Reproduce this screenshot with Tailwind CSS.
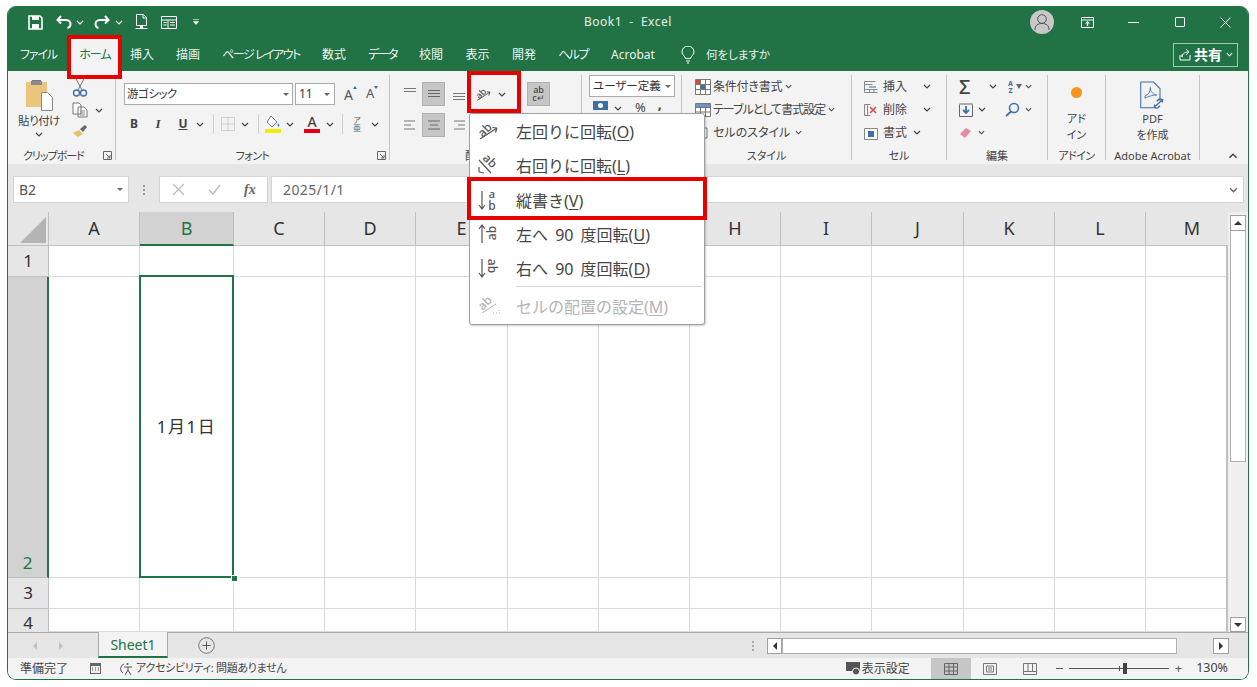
<!DOCTYPE html>
<html lang="ja">
<head>
<meta charset="UTF-8">
<title>Book1 - Excel</title>
<script src="https://cdn.jsdelivr.net/npm/@tailwindcss/browser@4"></script>
</head>
<body class="bg-white font-['Noto_Sans','Noto_Sans_CJK_JP',sans-serif] [font-feature-settings:'palt'] text-[#444]">
<svg class="hidden">
  <symbol id="chev" viewBox="0 0 8 5"><path d="M1 1l3 3 3-3" fill="none" stroke="currentColor" stroke-width="1.2"/></symbol>
  <symbol id="launch" viewBox="0 0 9 9"><path d="M.5 8.5v-8h8v8z M3 3l4 4M7 4v3H4" fill="none" stroke="#666" stroke-width="1"/></symbol>
  <symbol id="al-top" viewBox="0 0 14 16"><path d="M1 2.500h12M1 5.500h12" stroke="#777" stroke-width="1"/></symbol>
  <symbol id="al-mid" viewBox="0 0 14 16"><path d="M1 4.500h12M1 7.500h12M1 10.500h12" stroke="#666" stroke-width="1"/></symbol>
  <symbol id="al-bot" viewBox="0 0 14 16"><path d="M1 7.500h12M1 10.500h12M1 13.500h12" stroke="#777" stroke-width="1"/></symbol>
  <symbol id="lines-c" viewBox="0 0 14 10"><path d="M1 1h12M3 5h8M1 9h12" stroke="#666" stroke-width="1"/></symbol>
  <symbol id="lines-l" viewBox="0 0 14 10"><path d="M1 1h11M1 5h7M1 9h11" stroke="#777" stroke-width="1"/></symbol>
  <symbol id="lines-r" viewBox="0 0 14 10"><path d="M2 1h11M6 5h7M2 9h11" stroke="#777" stroke-width="1"/></symbol>
</svg>
<div class="relative w-[1257px] h-[687px] overflow-hidden pl-[7px] pt-[6px]">
  <div class="w-[1242px] h-[674px] flex flex-col rounded-[9px] overflow-hidden border-x border-b border-[#217346] bg-[#f3f3f3]">

    <!-- title bar -->
    <div class="h-[32px] shrink-0 bg-[#217346] flex items-center text-white pl-[20px] pr-[17px]">
      <svg class="w-[15px] h-[15px]" viewBox="0 0 15 15"><path d="M1 1h11l2 2v11H1z" fill="none" stroke="#fff" stroke-width="1.6"/><path d="M4 1h7v4H4zM4 9h7v5H4z" fill="#fff"/></svg>
      <svg class="ml-[13px] w-[16px] h-[14px]" viewBox="0 0 16 14"><path d="M5 1L1.500 5 5 8.500M2 5h8c3 0 4.500 2 4.500 4s-1 3.500-3 4" fill="none" stroke="#fff" stroke-width="2"/></svg>
      <svg class="ml-[4px] w-[8px] h-[5px]"><use href="#chev"/></svg>
      <svg class="ml-[10px] w-[16px] h-[14px]" viewBox="0 0 16 14"><path d="M11 1l3.500 4L11 8.500M14 5H6C3 5 1.500 7 1.500 9s1 3.500 3 4" fill="none" stroke="#fff" stroke-width="2"/></svg>
      <svg class="ml-[5px] w-[8px] h-[5px]"><use href="#chev"/></svg>
      <svg class="ml-[12px] w-[13px] h-[16px]" viewBox="0 0 13 16"><path d="M1.500.5h7l3 3v8h-10zM8 .5v3.500h3.500M.5 14.500h12" fill="none" stroke="#fff"/><path d="M5 12h3v2H5z" fill="#fff"/></svg>
      <svg class="ml-[13px] w-[16px] h-[13px]" viewBox="0 0 16 13"><path d="M.5.500h15v12H.5zM1 4h14M7 4v9M9 6.500h5M9 9h5M2.500 6.500h3M2.500 9h3" fill="none" stroke="#fff"/></svg>
      <svg class="ml-[16px] w-[6px] h-[6px]" viewBox="0 0 6 6"><path d="M0 .5h6M.5 2.500h5L3 5.500z" fill="#fff" stroke="#fff" stroke-width=".6"/></svg>
      <span class="ml-[385px] text-[12px] tracking-[.5px] text-white/90 whitespace-pre">Book1  -  Excel</span>
      <div class="ml-auto flex items-center">
        <div class="w-[24px] h-[24px] rounded-full bg-[#c8c8c8] flex items-center justify-center">
          <svg class="w-[16px] h-[18px]" viewBox="0 0 16 18"><circle cx="8" cy="6" r="4.300" fill="none" stroke="#555"/><path d="M1 17c0-5 3-6.500 7-6.500s7 1.500 7 6.500" fill="none" stroke="#555"/></svg>
        </div>
        <svg class="ml-[27px] w-[13px] h-[11px]" viewBox="0 0 13 11"><path d="M.5.500h12v10H.5zM1 3h11" fill="none" stroke="#fff"/><path d="M6.500 4l2.500 2.500H7.200V9H5.800V6.500H4z" fill="#fff"/></svg>
        <span class="ml-[34px] w-[11px] h-px bg-white"></span>
        <span class="ml-[36px] w-[10px] h-[10px] rounded-[1px] border border-white"></span>
        <svg class="ml-[35px] w-[11px] h-[11px]" viewBox="0 0 11 11"><path d="M.5.500l10 10M10.500.5l-10 10" stroke="#fff"/></svg>
      </div>
    </div>

    <!-- tabs -->
    <div class="h-[33px] shrink-0 bg-[#217346] flex items-center text-[12px] text-white/95">
      <span class="ml-[12px] w-[35px] text-center whitespace-nowrap tracking-[-1.200px]">ファイル</span>
      <span class="ml-[15px] w-[50px] h-full bg-[#f3f3f3] text-[#217346] flex items-center justify-center tracking-[-1px]">ホーム</span>
      <div class="ml-[10px] flex gap-[22px] [&>span]:text-center [&>span]:whitespace-nowrap">
        <span class="w-[24px]">挿入</span>
        <span class="w-[24px]">描画</span>
        <span class="w-[78px] tracking-[-1.500px]">ページ レイアウト</span>
        <span class="w-[24px]">数式</span>
        <span class="w-[29px] tracking-[-1.500px]">データ</span>
        <span class="w-[24px]">校閲</span>
        <span class="w-[25px]">表示</span>
        <span class="w-[24px]">開発</span>
        <span class="w-[30px] tracking-[-1.500px]">ヘルプ</span>
        <span class="w-[46px]">Acrobat</span>
      </div>
      <svg class="ml-[25px] w-[14px] h-[18px]" viewBox="0 0 14 18"><path d="M4.500 12.500C4 10 1 9 1 6a6 6 0 0112 0c0 3-3 4-3.500 6.500zM5 15h4M6 17h2" fill="none" stroke="#fff"/></svg>
      <span class="ml-[11px] text-[11.500px] text-white/90">何をしますか</span>
      <div class="ml-auto mr-[10px] w-[65px] h-[24px] border border-[#a5c9b5] flex items-center pl-[5px] gap-[2px]">
        <svg class="w-[13px] h-[13px]" viewBox="0 0 13 13"><path d="M1 7v5h10V7M3 6.500V9M3 9c0-3 3-5 6-5M7 1l3 3-3 3" fill="none" stroke="#fff"/></svg>
        <span class="font-bold text-[14px] text-white">共有</span>
        <svg class="ml-[2px] w-[7px] h-[5px]"><use href="#chev"/></svg>
      </div>
    </div>

    <!-- ribbon -->
    <div class="h-[93px] shrink-0 bg-[#f3f3f3] flex text-[12px] text-[#444] [&>section]:relative [&>section]:h-[85px] [&>section]:mt-[4px] [&>section]:border-r [&>section]:border-[#c6c6c6]">

      <!-- clipboard -->
      <section class="w-[108px]">
        <div class="h-[71px] flex">
          <div class="ml-[8px] w-[46px] flex flex-col items-center">
            <svg class="mt-[4px] w-[29px] h-[32px]" viewBox="0 0 29 32"><path d="M1 3h21v25H1z" fill="#ebc57e"/><path d="M7 3h9V1h-9z" fill="#777"/><path d="M6 2h11v4H6z" fill="#8a8a8a"/><path d="M16.500 13.500h6l5 5v13h-11z" fill="#fff" stroke="#888"/></svg>
            <span class="mt-[2px] text-[11.500px] leading-[16px] whitespace-nowrap tracking-[-.5px]">貼り付け</span>
            <svg class="mt-[3px] w-[8px] h-[5px]"><use href="#chev"/></svg>
          </div>
          <div class="ml-[10px] pt-[3px] flex flex-col">
            <svg class="w-[16px] h-[20px]" viewBox="0 0 16 20"><path d="M4 1l6 11M12 1L6 12" stroke="#777" fill="none"/><circle cx="4.500" cy="15" r="3" fill="none" stroke="#3f6fa8" stroke-width="1.400"/><circle cx="11.500" cy="15" r="3" fill="none" stroke="#3f6fa8" stroke-width="1.400"/></svg>
            <div class="mt-[4px] flex items-center">
              <svg class="w-[16px] h-[16px]" viewBox="0 0 16 16"><path d="M1 1h6l2 2v9H1zM6 5h6l3 3v7H6z" fill="#fff" stroke="#777"/><path d="M8 9h5M8 11h5M8 13h5" stroke="#888"/></svg>
              <svg class="ml-[7px] w-[8px] h-[5px]"><use href="#chev"/></svg>
            </div>
            <svg class="mt-[6px] w-[16px] h-[14px]" viewBox="0 0 16 14"><path d="M1 9l6-3 4 4-5 3z" fill="#e7c168"/><path d="M8 5l5-4 2 2-4 5z" fill="#666"/></svg>
          </div>
        </div>
        <div class="h-[17px] pl-[15px] text-[11px] leading-[20px] whitespace-nowrap tracking-[-1px]">クリップボード</div>
        <svg class="absolute right-[3px] top-[76px] w-[9px] h-[9px]"><use href="#launch"/></svg>
      </section>

      <!-- font -->
      <section class="w-[274px]">
        <div class="h-[71px] pl-[8px] pt-[8px]">
          <div class="flex items-center h-[22px]">
            <div class="w-[169px] h-[22px] bg-white border border-[#ababab] flex items-center pl-[2px] text-[11.500px] text-[#333] tracking-[-.5px]">游ゴシック<span class="ml-auto mr-[3px] w-0 h-0 border-x-[3px] border-t-[3px] border-x-transparent border-t-[#666]"></span></div>
            <div class="ml-[2px] w-[40px] h-[22px] bg-white border border-[#ababab] flex items-center pl-[3px] text-[12px] text-[#333]">11<span class="ml-auto mr-[4px] w-0 h-0 border-x-[3px] border-t-[3px] border-x-transparent border-t-[#666]"></span></div>
            <span class="ml-[9px] text-[14px] text-[#555] relative">A<span class="absolute -right-[4px] top-[2px] w-0 h-0 border-x-[2px] border-b-[3px] border-x-transparent border-b-[#3f6fa8]"></span></span>
            <span class="ml-[13px] text-[13px] text-[#555] relative">A<span class="absolute -right-[4px] top-[2px] w-0 h-0 border-x-[2px] border-t-[3px] border-x-transparent border-t-[#3f6fa8]"></span></span>
          </div>
          <div class="mt-[8px] flex items-center h-[22px] text-[#444]">
            <span class="w-[20px] text-center font-bold text-[12px]">B</span>
            <span class="ml-[4px] w-[20px] text-center italic font-bold text-[13px] font-['Liberation_Serif',serif]">I</span>
            <span class="ml-[6px] w-[18px] text-center font-bold text-[12px] underline">U</span>
            <svg class="ml-[4px] w-[8px] h-[5px]"><use href="#chev"/></svg>
            <span class="ml-[9px] w-px h-[20px] bg-[#d0d0d0]"></span>
            <svg class="ml-[7px] w-[14px] h-[14px]" viewBox="0 0 14 14"><path d="M.5.500h13v13H.5zM7 .5v13M.5 7h13" fill="none" stroke="#aaa" stroke-dasharray="1 1"/></svg>
            <svg class="ml-[6px] w-[8px] h-[5px]"><use href="#chev"/></svg>
            <span class="ml-[9px] w-px h-[20px] bg-[#d0d0d0]"></span>
            <svg class="ml-[6px] w-[16px] h-[18px]" viewBox="0 0 16 18"><path d="M6 1l6 6-5 5-5-5z" fill="#fff" stroke="#777"/><path d="M13 8c1 1.500 2 2 1 3.500-1 .5-2-.5-1-3.500z" fill="#3f7fc0"/><path d="M0 14h16v4H0z" fill="#f5ec00"/></svg>
            <svg class="ml-[5px] w-[8px] h-[5px]"><use href="#chev"/></svg>
            <div class="ml-[10px] w-[16px] flex flex-col items-center leading-[13px]"><span class="text-[14px] text-[#444] font-medium">A</span><span class="mt-[1px] w-[16px] h-[4px] bg-[#e60012]"></span></div>
            <svg class="ml-[6px] w-[8px] h-[5px]"><use href="#chev"/></svg>
            <span class="ml-[8px] w-px h-[20px] bg-[#d0d0d0]"></span>
            <span class="ml-[8px] w-[12px] text-center text-[8px] leading-[8px] text-[#666]">ア<br>亜</span>
            <svg class="ml-[8px] w-[8px] h-[5px]"><use href="#chev"/></svg>
          </div>
        </div>
        <div class="h-[17px] text-center text-[11px] leading-[20px] tracking-[-.6px]">フォント</div>
        <svg class="absolute right-[3px] top-[76px] w-[9px] h-[9px]"><use href="#launch"/></svg>
      </section>

      <!-- alignment -->
      <section class="w-[192px]">
        <div class="h-[71px] pl-[13px] pt-[7px]">
          <div class="flex items-center h-[24px]">
            <svg class="w-[14px] h-[16px]"><use href="#al-top"/></svg>
            <span class="ml-[5px] w-[23px] h-[24px] bg-[#c6c6c6] border border-[#b0b0b0] flex items-center justify-center"><svg class="w-[14px] h-[16px]"><use href="#al-mid"/></svg></span>
            <svg class="ml-[7px] w-[14px] h-[16px]"><use href="#al-bot"/></svg>
            <svg class="ml-[9px] w-[18px] h-[16px]" viewBox="0 0 24 21"><text x="8" y="14" text-anchor="middle" font-size="12" font-weight="500" fill="#555" transform="rotate(-45 8 10)">ab</text><path d="M3 19L20 8M20 8l-4.500-.5M20 8l-1.500 4.500" stroke="#555" stroke-width="1.300" fill="none"/></svg>
            <svg class="ml-[5px] w-[8px] h-[5px]"><use href="#chev"/></svg>
            <span class="ml-[21px] w-[23px] h-[24px] bg-[#c6c6c6] border border-[#b0b0b0] flex flex-col items-center justify-center text-[9px] leading-[8px] text-[#444] font-medium"><span>ab</span><span>c↵</span></span>
          </div>
          <div class="mt-[7px] flex items-center h-[24px]">
            <svg class="w-[14px] h-[10px]"><use href="#lines-l"/></svg>
            <span class="ml-[5px] w-[23px] h-[24px] bg-[#c6c6c6] border border-[#b0b0b0] flex items-center justify-center"><svg class="w-[14px] h-[10px]"><use href="#lines-c"/></svg></span>
            <svg class="ml-[7px] w-[14px] h-[10px]"><use href="#lines-r"/></svg>
          </div>
        </div>
        <div class="h-[17px] pl-[75px] text-[11px] leading-[20px]">配置</div>
      </section>

      <!-- number -->
      <section class="w-[100px]">
        <div class="h-[71px] pl-[7px]">
          <div class="w-[86px] h-[22px] bg-white border border-[#ababab] flex items-center pl-[3px] text-[11.500px] text-[#333] whitespace-nowrap">ユーザー定義<span class="ml-auto mr-[3px] w-0 h-0 border-x-[3px] border-t-[3px] border-x-transparent border-t-[#666]"></span></div>
          <div class="mt-[3px] pl-[3px] flex items-start h-[18px] leading-[14px]">
            <svg class="w-[18px] h-[14px]" viewBox="0 0 18 14"><path d="M1 1h15v9H1z" fill="#3f6fa8"/><circle cx="8.500" cy="5.500" r="2.500" fill="#fff"/></svg>
            <svg class="ml-[4px] mt-[6px] w-[8px] h-[5px]"><use href="#chev"/></svg>
            <span class="ml-[13px] text-[13px]">%</span>
            <span class="ml-[12px] text-[14px] leading-[7px] font-bold">,</span>
          </div>
        </div>
        <div class="h-[17px] text-center text-[11px] leading-[20px]">数値</div>
      </section>

      <!-- styles -->
      <section class="w-[170px]">
        <div class="h-[71px] pl-[13px] flex flex-col [&>div]:h-[23px] [&>div]:flex [&>div]:items-center">
          <div><svg class="w-[16px] h-[16px]" viewBox="0 0 16 16"><path d="M.5.500h15v15H.5zM.5 5.500h15M.5 10.500h15M5.500.5v15M10.500.5v15" fill="#fff" stroke="#777"/><path d="M1 1h4v4H1z" fill="#d84a3a"/><path d="M6 6h4v4H6z" fill="#3f6fa8"/></svg><span class="ml-[2px] whitespace-nowrap tracking-[-.2px]">条件付き書式</span><svg class="ml-[3px] w-[7px] h-[5px]"><use href="#chev"/></svg></div>
          <div><svg class="w-[16px] h-[16px]" viewBox="0 0 16 16"><path d="M.5 1.500h15v13H.5zM.5 5.500h15M.5 10h15M5.500 1.500v13M10.500 1.500v13" fill="#fff" stroke="#777"/><path d="M1 2h14v3H1z" fill="#6f93c0"/></svg><span class="ml-[2px] whitespace-nowrap tracking-[-1px]">テーブルとして書式設定</span><svg class="ml-[3px] w-[7px] h-[5px]"><use href="#chev"/></svg></div>
          <div><svg class="w-[16px] h-[16px]" viewBox="0 0 16 16"><path d="M2 3h10v10H2z" fill="#fff" stroke="#777"/></svg><span class="ml-[2px] whitespace-nowrap">セルのスタイル</span><svg class="ml-[5px] w-[7px] h-[5px]"><use href="#chev"/></svg></div>
        </div>
        <div class="h-[17px] text-center text-[11px] leading-[20px]">スタイル</div>
      </section>

      <!-- cells -->
      <section class="w-[95px]">
        <div class="h-[71px] pl-[12px] flex flex-col [&>div]:h-[23px] [&>div]:flex [&>div]:items-center">
          <div><svg class="w-[14px] h-[14px]" viewBox="0 0 14 14"><path d="M.5 1.500h11M.5 4.500h8M.5 9.500h13M.5 12.500h13M.5 1.500v11M5.500 9.500v3M10 9.500v3" fill="none" stroke="#888"/><path d="M5 7h7" stroke="#3f6fa8"/></svg><span class="ml-[5px]">挿入</span><svg class="ml-[16px] w-[8px] h-[5px]"><use href="#chev"/></svg></div>
          <div><svg class="w-[14px] h-[14px]" viewBox="0 0 14 14"><path d="M.5 1.500h6M.5 12.500h6M.5 1.500v11M3.500 1.500v11" fill="none" stroke="#888"/><path d="M6 4l6 6M12 4l-6 6" stroke="#d84a3a" stroke-width="1.500"/></svg><span class="ml-[5px]">削除</span><svg class="ml-[16px] w-[8px] h-[5px]"><use href="#chev"/></svg></div>
          <div><svg class="w-[14px] h-[14px]" viewBox="0 0 14 14"><path d="M.5 2.500h13v11H.5z" fill="#fff" stroke="#888"/><path d="M4 5h6v6H4z" fill="#3f6fa8"/></svg><span class="ml-[5px]">書式</span><svg class="ml-[6px] w-[8px] h-[5px]"><use href="#chev"/></svg></div>
        </div>
        <div class="h-[17px] text-center text-[11px] leading-[20px]">セル</div>
      </section>

      <!-- editing -->
      <section class="w-[101px]">
        <div class="h-[71px] pl-[12px] flex flex-col [&>div]:h-[23px] [&>div]:flex [&>div]:items-center">
          <div><span class="w-[14px] text-[20px] leading-[20px] text-[#444] font-medium">Σ</span><svg class="ml-[16px] w-[8px] h-[5px]"><use href="#chev"/></svg><span class="ml-[9px] w-[9px] text-[7px] leading-[7px] text-[#3f6fa8] font-bold text-center">A<br>Z</span><svg class="ml-[1px] w-[6px] h-[5px]" viewBox="0 0 6 5"><path d="M0 0h6L3 5z" fill="#666"/></svg><svg class="ml-[3px] w-[7px] h-[5px]"><use href="#chev"/></svg></div>
          <div><svg class="w-[14px] h-[14px]" viewBox="0 0 14 14"><path d="M.5 1h13M.5 1.500v12h13v-12" fill="none" stroke="#666"/><path d="M7 3v7M4 7l3 3 3-3" fill="none" stroke="#3f6fa8" stroke-width="1.800"/></svg><svg class="ml-[5px] w-[8px] h-[5px]"><use href="#chev"/></svg><svg class="ml-[19px] w-[15px] h-[15px]" viewBox="0 0 15 15"><circle cx="9" cy="6" r="4.500" fill="none" stroke="#3f6fa8" stroke-width="1.500"/><path d="M6 9.500L1 14" stroke="#3f6fa8" stroke-width="1.800"/></svg><svg class="ml-[5px] w-[7px] h-[5px]"><use href="#chev"/></svg></div>
          <div><svg class="w-[14px] h-[13px]" viewBox="0 0 14 13"><path d="M1 8l6-6 5 3-6 7z" fill="#e78ba0"/></svg><svg class="ml-[5px] w-[7px] h-[5px]"><use href="#chev"/></svg></div>
        </div>
        <div class="h-[17px] text-center text-[11px] leading-[20px]">編集</div>
      </section>

      <!-- add-in -->
      <section class="w-[58px]">
        <div class="h-[71px] flex flex-col items-center text-[11px] leading-[16px]">
          <span class="mt-[12px] w-[11px] h-[11px] rounded-full bg-[#f7941d]"></span>
          <span class="mt-[13px]">アド</span>
          <span>イン</span>
        </div>
        <div class="h-[17px] text-center text-[11px] leading-[20px] tracking-[-.5px] whitespace-nowrap">アドイン</div>
      </section>

      <!-- acrobat -->
      <section class="w-[94px]">
        <div class="h-[71px] flex flex-col items-center text-[11px] leading-[16px]">
          <svg class="mt-[6px] w-[27px] h-[30px]" viewBox="0 0 24 28"><path d="M1 1h12l6 6v12M1 1v24h13" fill="none" stroke="#3f6fa8"/><path d="M5 14c3-1 5-4 5-8 0 4 3 7 6 7-3 0-7 1-11 3z" fill="none" stroke="#3f6fa8" stroke-width=".8"/><path d="M14 24l8-7M16 19l2-2c2-1 4 1 3 3M14 22c-1 2 1 4 3 3l2-2" fill="none" stroke="#3f6fa8" stroke-width="1.300"/></svg>
          <span>PDF</span>
          <span>を作成</span>
        </div>
        <div class="h-[17px] text-center text-[11px] leading-[20px] whitespace-nowrap">Adobe Acrobat</div>
      </section>

      <div class="flex-1 flex items-end justify-end pr-[10px] pb-[5px]"><svg class="w-[10px] h-[6px] rotate-180"><use href="#chev"/></svg></div>
    </div>

    <!-- formula bar -->
    <div class="h-[48px] shrink-0 bg-[#e6e6e6] flex pt-[12px] pl-[5px]">
      <div class="w-[116px] h-[27px] bg-white border border-[#d4d4d4] flex items-center pl-[5px] text-[14px] text-[#555]">B2<span class="ml-auto mr-[5px] w-0 h-0 border-x-[3px] border-t-[3px] border-x-transparent border-t-[#666]"></span></div>
      <div class="w-[30px] h-[27px] flex flex-col items-center justify-center gap-[2px]"><span class="w-[2px] h-[2px] bg-[#999]"></span><span class="w-[2px] h-[2px] bg-[#999]"></span><span class="w-[2px] h-[2px] bg-[#999]"></span></div>
      <div class="w-[109px] h-[27px] bg-white border border-[#d4d4d4] flex items-center">
        <svg class="ml-[12px] w-[13px] h-[13px]" viewBox="0 0 13 13"><path d="M1 1l11 11M12 1L1 12" stroke="#bbb" stroke-width="1.200"/></svg>
        <svg class="ml-[23px] w-[13px] h-[11px]" viewBox="0 0 13 11"><path d="M1 6l4 4 7-9" fill="none" stroke="#bbb" stroke-width="1.400"/></svg>
        <span class="ml-[23px] text-[14px] italic font-bold font-['Liberation_Serif',serif] text-[#666]">fx</span>
      </div>
      <div class="ml-[3px] w-[973px] h-[27px] bg-white border border-[#d4d4d4] flex items-center pl-[11px] text-[14px] text-[#666] tracking-[.4px]">2025/1/1<svg class="ml-auto mr-[5px] w-[9px] h-[6px]"><use href="#chev"/></svg></div>
    </div>

    <!-- sheet -->
    <div class="h-[420px] shrink-0 flex">
      <div class="relative w-[1220px] h-[420px] grid grid-cols-[41px_91px_94px_91px_91px_92px_91px_91px_91px_91px_92px_91px_91px_82px] grid-rows-[34px_31px_301px_31px_23px] bg-white overflow-hidden [&>div]:border-r [&>div]:border-b [&>div]:border-[#d9d9d9]">
        <!-- header row -->
        <div class="!border-[#c0c0c0] bg-[#e6e6e6] flex items-end justify-end pr-[2px] pb-[2px]"><span class="w-[26px] h-[26px] bg-[#b4b4b4] [clip-path:polygon(100%_0,100%_100%,0_100%)]"></span></div>
        <div class="!border-[#c0c0c0] bg-[#e6e6e6] flex items-center justify-center text-[18px] text-[#333]">A</div>
        <div class="!border-b-2 !border-b-[#217346] !border-r-[#c0c0c0] bg-[#d2d2d2] flex items-center justify-center text-[18px] text-[#217346]">B</div>
        <div class="!border-[#c0c0c0] bg-[#e6e6e6] flex items-center justify-center text-[18px] text-[#333]">C</div>
        <div class="!border-[#c0c0c0] bg-[#e6e6e6] flex items-center justify-center text-[18px] text-[#333]">D</div>
        <div class="!border-[#c0c0c0] bg-[#e6e6e6] flex items-center justify-center text-[18px] text-[#333]">E</div>
        <div class="!border-[#c0c0c0] bg-[#e6e6e6] flex items-center justify-center text-[18px] text-[#333]">F</div>
        <div class="!border-[#c0c0c0] bg-[#e6e6e6] flex items-center justify-center text-[18px] text-[#333]">G</div>
        <div class="!border-[#c0c0c0] bg-[#e6e6e6] flex items-center justify-center text-[18px] text-[#333]">H</div>
        <div class="!border-[#c0c0c0] bg-[#e6e6e6] flex items-center justify-center text-[18px] text-[#333]">I</div>
        <div class="!border-[#c0c0c0] bg-[#e6e6e6] flex items-center justify-center text-[18px] text-[#333]">J</div>
        <div class="!border-[#c0c0c0] bg-[#e6e6e6] flex items-center justify-center text-[18px] text-[#333]">K</div>
        <div class="!border-[#c0c0c0] bg-[#e6e6e6] flex items-center justify-center text-[18px] text-[#333]">L</div>
        <div class="!border-[#c0c0c0] !border-r-0 bg-[#e6e6e6] flex items-center justify-center text-[18px] text-[#333] pl-[10px]">M</div>
        <!-- row 1 -->
        <div class="!border-[#c0c0c0] bg-[#e6e6e6] flex items-center justify-center text-[17px] text-[#333]">1</div>
        <div></div><div></div><div></div><div></div><div></div><div></div><div></div><div></div><div></div><div></div><div></div><div></div><div></div>
        <!-- row 2 -->
        <div class="!border-r-2 !border-r-[#217346] !border-b-[#c0c0c0] bg-[#d2d2d2] flex items-end justify-center text-[17px] text-[#217346] pb-[2px]">2</div>
        <div></div>
        <div class="flex items-center justify-center text-[17px] tracking-[1.500px] text-[#333]">1月1日</div>
        <div></div><div></div><div></div><div></div><div></div><div></div><div></div><div></div><div></div><div></div><div></div>
        <!-- row 3 -->
        <div class="!border-[#c0c0c0] bg-[#e6e6e6] flex items-center justify-center text-[17px] text-[#333]">3</div>
        <div></div><div></div><div></div><div></div><div></div><div></div><div></div><div></div><div></div><div></div><div></div><div></div><div></div>
        <!-- row 4 -->
        <div class="!border-r-[#c0c0c0] !border-b-0 bg-[#e6e6e6] flex items-start justify-center text-[17px] text-[#333] leading-[28px]">4</div>
        <div></div><div></div><div></div><div></div><div></div><div></div><div></div><div></div><div></div><div></div><div></div><div></div><div></div>
        <!-- selection -->
        <span class="absolute left-[131px] top-[63px] w-[95px] h-[303px] border-2 border-[#217346]"></span>
        <span class="absolute left-[223px] top-[363px] w-[5px] h-[5px] bg-[#217346] border border-white box-content"></span>
        <span class="absolute right-0 top-[33px] bottom-0 w-[2px] bg-[#c0c0c0]"></span>
      </div>
      <!-- vertical scrollbar -->
      <div class="w-[20px] h-[420px] bg-[#f0f0f0] pl-[2px] pt-[3px] flex flex-col">
        <div class="w-[16px] h-[16px] bg-white border border-[#a0a0a0] flex items-center justify-center"><span class="w-0 h-0 border-x-[4px] border-b-[4px] border-x-transparent border-b-[#333]"></span></div>
        <div class="w-[16px] h-[231px] bg-white border-x border-b border-[#b0b0b0]"></div>
        <div class="w-[16px] h-[15px] mt-auto bg-white border border-[#a0a0a0] flex items-center justify-center"><span class="w-0 h-0 border-x-[4px] border-t-[4px] border-x-transparent border-t-[#333]"></span></div>
      </div>
    </div>

    <!-- sheet tabs -->
    <div class="h-[26px] shrink-0 bg-[#e6e6e6] border-t border-[#ababab] flex items-center">
      <span class="ml-[25px] w-0 h-0 border-y-[4px] border-r-[4px] border-y-transparent border-r-[#c0c0c0]"></span>
      <span class="ml-[22px] w-0 h-0 border-y-[4px] border-l-[4px] border-y-transparent border-l-[#c0c0c0]"></span>
      <div class="ml-[35px] -mt-px w-[70px] h-[26px] bg-[#f3f3f3] border-x border-[#ababab] border-b-2 border-b-[#217346] flex items-center justify-center text-[14px] text-[#217346]">Sheet1</div>
      <svg class="ml-[30px] w-[17px] h-[17px]" viewBox="0 0 17 17"><circle cx="8.500" cy="8.500" r="7.800" fill="none" stroke="#777"/><path d="M8.500 4.500v8M4.500 8.500h8" stroke="#555"/></svg>
      <div class="ml-[537px] flex flex-col gap-[2px]"><span class="w-[2px] h-[2px] bg-[#aaa]"></span><span class="w-[2px] h-[2px] bg-[#aaa]"></span><span class="w-[2px] h-[2px] bg-[#aaa]"></span></div>
      <div class="ml-[13px] w-[15px] h-[16px] bg-white border border-[#a0a0a0] flex items-center justify-center"><span class="w-0 h-0 border-y-[4px] border-r-[4px] border-y-transparent border-r-[#333]"></span></div>
      <div class="w-[395px] h-[16px] bg-white border border-[#b0b0b0]"></div>
      <div class="ml-[36px] w-[16px] h-[16px] bg-white border border-[#a0a0a0] flex items-center justify-center"><span class="w-0 h-0 border-y-[4px] border-l-[4px] border-y-transparent border-l-[#333]"></span></div>
    </div>

    <!-- status bar -->
    <div class="flex-1 bg-[#f3f3f3] flex items-center text-[12px] text-[#444]">
      <span class="ml-[12px] whitespace-nowrap">準備完了</span>
      <svg class="ml-[21px] w-[13px] h-[13px]" viewBox="0 0 13 13"><path d="M1 1h11v11H1z" fill="#666"/><path d="M2 4h9v7H2z" fill="#eee"/><path d="M3 6h1M6 6h1M9 6h1M3 8h1M6 8h1M9 8h1" stroke="#555"/></svg>
      <svg class="ml-[17px] w-[15px] h-[14px]" viewBox="0 0 15 14"><path d="M5 2a5 5 0 00-1 9" fill="none" stroke="#555"/><circle cx="8.500" cy="2" r="1" fill="#555"/><path d="M5 5h8M9 5v3M6 13l3-5 3 5" fill="none" stroke="#555"/></svg>
      <span class="ml-[2px] text-[11px] tracking-[-.3px] whitespace-nowrap">アクセシビリティ: 問題ありません</span>
      <div class="ml-auto mr-[20px] h-full flex items-center">
        <svg class="w-[15px] h-[14px]" viewBox="0 0 15 14"><path d="M0 0h14v9H0z" fill="#555"/><circle cx="10" cy="9.500" r="3.500" fill="#555" stroke="#f3f3f3"/></svg>
        <span class="ml-px whitespace-nowrap">表示設定</span>
        <div class="ml-[21px] w-[40px] h-full bg-[#c6c6c6] flex items-center justify-center"><svg class="w-[14px] h-[12px]" viewBox="0 0 14 12"><path d="M.5.500h13v11H.5zM5 .5v11M9.500.5v11M.5 4h13M.5 8h13" fill="none" stroke="#666"/></svg></div>
        <svg class="ml-[12px] w-[14px] h-[12px]" viewBox="0 0 14 12"><path d="M.5.500h13v11H.5zM3.500 3h7v6h-7zM5 5h4M5 7h4" fill="none" stroke="#777"/></svg>
        <svg class="ml-[26px] w-[14px] h-[12px]" viewBox="0 0 14 12"><path d="M.5.500h13v11H.5zM.5 8.500h13M5 .5v8M9.500.5v8" fill="none" stroke="#777"/></svg>
        <span class="ml-[19px] w-[7px] h-px bg-[#555]"></span>
        <div class="ml-[6px] relative w-[100px] h-px bg-[#555]"><span class="absolute left-[54px] -top-[5px] w-[4px] h-[11px] bg-[#444]"></span><span class="absolute left-[50px] -top-[2px] w-px h-[5px] bg-[#555]"></span></div>
        <span class="ml-[6px] text-[13px] text-[#555]">+</span>
        <span class="ml-[14px] text-[12.500px] whitespace-nowrap">130%</span>
      </div>
    </div>
  </div>

  <!-- orientation menu -->
  <div class="absolute left-[469px] top-[113px] w-[236px] h-[212px] bg-white border border-[#a0a0a0] rounded-[3px] shadow-[1px_1px_2px_rgba(0,0,0,.2)] pt-[1px] flex flex-col text-[16px] text-[#444] [font-feature-settings:normal] [&>div]:h-[34.500px] [&>div]:flex [&>div]:items-center [&>div]:whitespace-nowrap [&_u]:underline-offset-2">
    <div><svg class="ml-[7px] w-[24px] h-[24px]" viewBox="0 0 24 24"><text x="8" y="14" text-anchor="middle" font-size="12" font-weight="500" fill="#555" transform="rotate(-45 8 10)">ab</text><path d="M3 19L20 8M20 8l-4.500-.5M20 8l-1.500 4.500" stroke="#555" stroke-width="1.200" fill="none"/></svg><span class="ml-[15px]">左回りに回転(<u>O</u>)</span></div>
    <div><svg class="ml-[7px] w-[24px] h-[24px]" viewBox="0 0 24 24"><text x="13" y="11" text-anchor="middle" font-size="12" font-weight="500" fill="#555" transform="rotate(45 13 7)">ab</text><path d="M2 6l12 13M2 18l0 -5M2 18l5 1" stroke="#555" stroke-width="1.200" fill="none"/></svg><span class="ml-[15px]">右回りに回転(<u>L</u>)</span></div>
    <div><svg class="ml-[7px] w-[24px] h-[24px]" viewBox="0 0 24 24"><path d="M5 2v18M2 16l3 4 3-4" stroke="#555" stroke-width="1.200" fill="none"/><text x="15" y="9" text-anchor="middle" font-size="11" font-weight="500" fill="#555">a</text><text x="15" y="21" text-anchor="middle" font-size="12" font-weight="500" fill="#555">b</text></svg><span class="ml-[15px]">縦書き(<u>V</u>)</span></div>
    <div><svg class="ml-[7px] w-[24px] h-[24px]" viewBox="0 0 24 24"><path d="M5 2v18M2 6l3-4 3 4" stroke="#555" stroke-width="1.200" fill="none"/><text x="0" y="0" text-anchor="middle" font-size="12" font-weight="500" fill="#555" transform="translate(19 10) rotate(-90)">ab</text></svg><span class="ml-[15px] [word-spacing:3px]">左へ 90 度回転(<u>U</u>)</span></div>
    <div><svg class="ml-[7px] w-[24px] h-[24px]" viewBox="0 0 24 24"><path d="M5 2v18M2 16l3 4 3-4" stroke="#555" stroke-width="1.200" fill="none"/><text x="0" y="0" text-anchor="middle" font-size="12" font-weight="500" fill="#555" transform="translate(11 9) rotate(90)">ab</text></svg><span class="ml-[15px] [word-spacing:3px]">右へ 90 度回転(<u>D</u>)</span></div>
    <span class="ml-[46px] mr-[2px] h-px bg-[#d8d8d8]"></span>
    <div class="!h-[37px] pt-[2px] text-[#b4b4b4]"><svg class="ml-[7px] w-[24px] h-[24px]" viewBox="0 0 24 24"><text x="8" y="12" text-anchor="middle" font-size="12" font-weight="500" fill="#b0b0b0" transform="rotate(-45 8 8)">ab</text><path d="M5 18L19 9" stroke="#b0b0b0" fill="none"/><path d="M16 18h1M19 18h1M22 18h1M22 15v1" stroke="#b0b0b0" fill="none"/></svg><span class="ml-[15px]">セルの配置の設定(<u>M</u>)</span></div>
  </div>

  <!-- red annotation boxes -->
  <span class="absolute left-[67px] top-[35px] w-[55px] h-[44px] border-[4px] border-[#e60000]"></span>
  <span class="absolute left-[467px] top-[71px] w-[54px] h-[42px] border-[4px] border-[#e60000]"></span>
  <span class="absolute left-[467px] top-[177px] w-[240px] h-[43px] border-[4px] border-[#e60000]"></span>
</div>
</body>
</html>
